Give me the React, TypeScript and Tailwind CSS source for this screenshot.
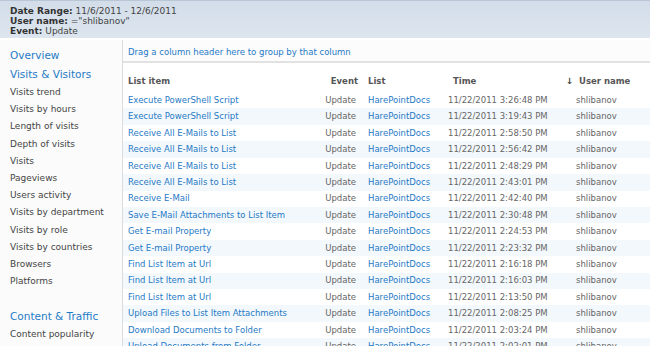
const rows: [string, string][] = [
  ['Execute PowerShell Script', '3:26:48 PM'],
  ['Execute PowerShell Script', '3:19:43 PM'],
  ['Receive All E-Mails to List', '2:58:50 PM'],
  ['Receive All E-Mails to List', '2:56:42 PM'],
  ['Receive All E-Mails to List', '2:48:29 PM'],
  ['Receive All E-Mails to List', '2:43:01 PM'],
  ['Receive E-Mail', '2:42:40 PM'],
  ['Save E-Mail Attachments to List Item', '2:30:48 PM'],
  ['Get E-mail Property', '2:24:53 PM'],
  ['Get E-mail Property', '2:23:32 PM'],
  ['Find List Item at Url', '2:16:18 PM'],
  ['Find List Item at Url', '2:16:03 PM'],
  ['Find List Item at Url', '2:13:50 PM'],
  ['Upload Files to List Item Attachments', '2:08:25 PM'],
  ['Download Documents to Folder', '2:03:24 PM'],
  ['Upload Documents from Folder', '2:02:01 PM'],
];

const visits = [
  'Visits trend',
  'Visits by hours',
  'Length of visits',
  'Depth of visits',
  'Visits',
  'Pageviews',
  'Users activity',
  'Visits by department',
  'Visits by role',
  'Visits by countries',
  'Browsers',
  'Platforms',
];

export default function App() {
  return (
    <div className="h-[346px] w-[650px] overflow-hidden bg-white font-['DejaVu_Sans',sans-serif]">
      {/* Filter summary */}
      <div className="h-[38px] border-t border-[#b8c6d6] bg-gradient-to-b from-[#d3dde9] to-[#dde6ef] px-[10px] pt-[5px] text-[9px] leading-[10px] text-[#444]">
        <div>
          <b className="text-[#333]">Date Range:</b> 11/6/2011 - 12/6/2011
        </div>
        <div>
          <b className="text-[#333]">User name:</b> ="shlibanov"
        </div>
        <div>
          <b className="text-[#333]">Event:</b> Update
        </div>
      </div>

      <div className="mt-[2px] flex">
        {/* Sidebar */}
        <div className="w-[123px] shrink-0 border-r border-[#dcdcdc] bg-[#fbfbfb] pl-[10px] pt-[7px]">
          <div className="text-[10.5px] leading-[17px] text-[#1f7ac6]">Overview</div>
          <div className="text-[10.5px] leading-[20px] text-[#1f7ac6]">Visits &amp; Visitors</div>
          {visits.map((v) => (
            <div key={v} className="text-[9px] leading-[17.2px] text-[#444]">
              {v}
            </div>
          ))}
          <div className="mt-[16px] text-[10.5px] leading-[20px] text-[#1f7ac6]">Content &amp; Traffic</div>
          <div className="text-[9px] leading-[17px] text-[#444]">Content popularity</div>
        </div>

        {/* Grid */}
        <div className="flex-1 text-[8.5px]">
          <div className="h-[23px] border-b-2 border-[#e2e2e2] bg-[#fcfcfc] pl-[5px] pt-[1px] leading-[22px] text-[#1f7ac6]">
            Drag a column header here to group by that column
          </div>
          <div className="flex h-[29px] items-end pb-[4px] bg-white pl-[5px] font-bold text-[#555]">
            <div className="w-[184px]">List item</div>
            <div className="w-[46px] text-right">Event</div>
            <div className="w-[92px] pl-[10px]">List</div>
            <div className="w-[116px] pl-[3px]">Time</div>
            <div className="w-[13px] text-[#444]">↓</div>
            <div>User name</div>
          </div>
          {rows.map(([item, time], i) => (
            <div
              key={i}
              className={`flex h-[16.43px] items-center pl-[5px] ${i % 2 === 0 ? 'bg-white' : 'bg-[#f3f8fc]'}`}
            >
              <div className="w-[184px] whitespace-nowrap text-[#1f7ac6]">{item}</div>
              <div className="w-[44px] text-right text-[#666]">Update</div>
              <div className="w-[92px] pl-[12px] text-[#1f7ac6]">HarePointDocs</div>
              <div className="w-[128px] whitespace-nowrap text-[#666]">11/22/2011 {time}</div>
              <div className="text-[#666]">shlibanov</div>
            </div>
          ))}
        </div>
      </div>
    </div>
  );
}
